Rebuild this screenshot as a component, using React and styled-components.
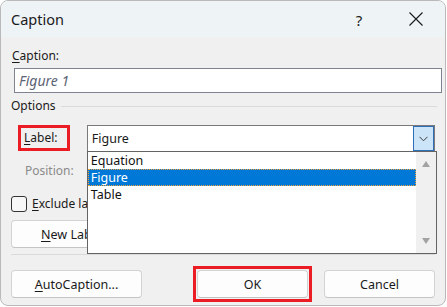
import styled, { createGlobalStyle } from 'styled-components';

const Global = createGlobalStyle`
body{
margin:0;
background:#ffffff;
font-family: "Noto Sans", "Open Sans", sans-serif;
}
`

const Window = styled.div`
width: 446px;
height: 306px;
box-sizing: border-box;
border: 1px solid #b9b9b9;
border-radius: 8px;
overflow: hidden;
background: #f0f0f0;
display: flex;
flex-direction: column;
color: #1a1a1a;
font-size: 12px;
`

const TitleBar = styled.div`
height: 36px;
flex-shrink: 0;
background: #eef3f6;
display: flex;
align-items: center;
padding-left: 10px;
font-size: 14.5px;
color: #1b1b1b;
>span:first-child{
flex: 1;
}
`

const Help = styled.span`
width: 20px;
text-align: center;
font-size: 15px;
margin-right: 40px;
margin-top: 2px;
`

const Close = styled.span`
width: 14px;
height: 14px;
margin-right: 22px;
display: flex;
svg{ display:block; }
`

const Body = styled.div`
flex: 1;
display: flex;
flex-direction: column;
padding: 0 10px 0 9px;
`

const Text = styled.div`
line-height: 16px;
height: 16px;
margin: ${p => p.$m || '0'};
color: ${p => p.$dim ? '#8a8a8a' : '#1a1a1a'};
white-space: nowrap;
u{ text-decoration-thickness: 1px; text-underline-offset: 2px; }
`

const Input = styled.div`
width: 422px;
height: 23px;
margin: 4px 0 0 4px;
background: #fff;
border: 1px solid #7e8590;
display: flex;
align-items: center;
padding-left: 4px;
font-style: italic;
font-size: 14px;
color: #5b6475;
`

const Group = styled.div`
display: flex;
align-items: center;
margin: 5px 0 0 1px;
line-height: 16px;
&::after{
content: '';
flex: 1;
height: 1px;
background: #dadada;
margin: 1px -2px 0 5px;
}
`

const LabelRow = styled.div`
display: flex;
align-items: center;
margin-top: 11px;
`

const RedBox = styled.div`
width: 52px;
height: 26px;
box-sizing: border-box;
border: 3px solid #ec1c24;
margin-left: 8px;
display: flex;
align-items: center;
padding-left: 3px;
margin-right: 17px;
`

const Combo = styled.div`
position: relative;
width: 350px;
height: 26px;
box-sizing: border-box;
background: #fff;
border: 1px solid #7a7a7a;
border-bottom: none;
display: flex;
align-items: center;
padding-left: 4px;
font-size: 12.5px;
`

const DropButton = styled.div`
position: absolute;
right: 0;
top: 0;
width: 21px;
height: 25px;
box-sizing: border-box;
background: #cce4f7;
border: 1px solid #2f6fb9;
display: flex;
align-items: center;
justify-content: center;
`

const List = styled.div`
position: absolute;
top: 25px;
left: -1px;
width: 350px;
height: 103px;
box-sizing: border-box;
border: 1px solid #646464;
background: #fff;
display: flex;
z-index: 2;
`

const Items = styled.div`
flex: 1;
display: flex;
flex-direction: column;
`

const Item = styled.div`
height: 17px;
line-height: 17px;
padding-left: 3px;
font-size: 12.5px;
box-sizing: border-box;
background: ${p => p.$sel ? '#0078d7' : 'transparent'};
color: ${p => p.$sel ? '#fff' : '#111'};
outline: ${p => p.$sel ? '1px dotted #f3a43a' : 'none'};
outline-offset: -1px;
`

const Scroll = styled.div`
width: 20px;
background: #f0f0f0;
display: flex;
flex-direction: column;
justify-content: space-between;
align-items: center;
padding: 9px 0 9px;
`

const Tri = styled.div`
width: 0;
height: 0;
border-left: 4.5px solid transparent;
border-right: 4.5px solid transparent;
${p => p.$down ? 'border-top: 6px solid #a3a3a3;' : 'border-bottom: 6px solid #a3a3a3;'}
`

const CheckRow = styled.div`
display: flex;
align-items: center;
gap: 5px;
margin: 17px 0 0 1px;
`

const Check = styled.div`
width: 16px;
height: 16px;
box-sizing: border-box;
border: 1px solid #333;
border-radius: 3px;
background: #f7f7f7;
`

const ButtonRow = styled.div`
display: flex;
align-items: center;
gap: ${p => p.$gap || '12px'};
margin-top: ${p => p.$mt || '0'};
padding-left: 1px;
`

const Button = styled.div`
width: ${p => p.$w || '111px'};
height: 28px;
box-sizing: border-box;
background: #fdfdfd;
border: 1px solid #d3d3d3;
border-bottom-color: #c4c4c4;
border-radius: 4px;
display: flex;
align-items: center;
justify-content: center;
font-size: 12.5px;
color: #1a1a1a;
u{ text-decoration-thickness: 1px; text-underline-offset: 2px; }
`

const Separator = styled.div`
height: 1px;
background: #dadada;
margin: 6px 0 0 1px;
`

const OkFrame = styled.div`
margin-left: auto;
border: 3px solid #ec1c24;
padding: 1px;
display: flex;
`

function Chevron() {
    return (
        <svg width="9" height="6" viewBox="0 0 9 6">
            <path d="M0.5 0.8 L4.5 4.8 L8.5 0.8" fill="none" stroke="#3c3c3c" strokeWidth="1" />
        </svg>
    );
}

export default function App() {
    return (
        <>
            <Global />
            <Window>
                <TitleBar>
                    <span>Caption</span>
                    <Help>?</Help>
                    <Close>
                        <svg width="14" height="14" viewBox="0 0 14 14">
                            <path d="M0.5 0.5 L13.5 13.5 M13.5 0.5 L0.5 13.5" stroke="#1a1a1a" strokeWidth="1.1" />
                        </svg>
                    </Close>
                </TitleBar>
                <Body>
                    <Text $m="11px 0 0 2px"><u>C</u>aption:</Text>
                    <Input>Figure 1</Input>
                    <Group>Options</Group>
                    <LabelRow>
                        <RedBox><Text><u>L</u>abel:</Text></RedBox>
                        <Combo>
                            Figure
                            <DropButton><Chevron /></DropButton>
                            <List>
                                <Items>
                                    <Item>Equation</Item>
                                    <Item $sel>Figure</Item>
                                    <Item>Table</Item>
                                </Items>
                                <Scroll>
                                    <Tri />
                                    <Tri $down />
                                </Scroll>
                            </List>
                        </Combo>
                    </LabelRow>
                    <Text $dim $m="12px 0 0 15px">Position:</Text>
                    <CheckRow>
                        <Check />
                        <Text><u>E</u>xclude label from caption</Text>
                    </CheckRow>
                    <ButtonRow $mt="8px">
                        <Button $w="131px"><u>N</u>ew Label...</Button>
                        <Button $w="131px"><u>D</u>elete Label</Button>
                        <Button $w="131px"><u>N</u>umbering...</Button>
                    </ButtonRow>
                    <Separator />
                    <ButtonRow $mt="11px">
                        <Button $w="131px"><u>A</u>utoCaption...</Button>
                        <OkFrame><Button>OK</Button></OkFrame>
                        <Button>Cancel</Button>
                    </ButtonRow>
                </Body>
            </Window>
        </>
    );
}
